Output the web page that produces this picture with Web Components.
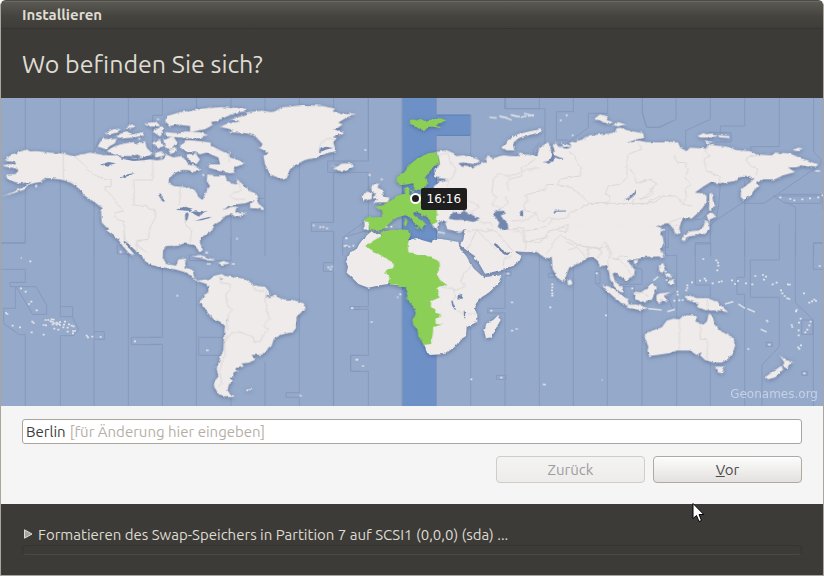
<!DOCTYPE html>
<html lang="de">
<head>
<meta charset="utf-8">
<title>Installieren</title>
<style>
  html, body {
    margin: 0;
    background: #fff;
  }
  body {
    font-family: "Ubuntu", "Open Sans", "Noto Sans", sans-serif;
    font-size: 15px;
    line-height: 20px;
  }
</style>
</head>
<body>
<installer-window caption="Installieren" heading="Wo befinden Sie sich?">
  <time-zone-map credit="Geonames.org">
    <map-pin time="16:16"></map-pin>
  </time-zone-map>
  <location-form city="Berlin" hint="[für Änderung hier eingeben]"></location-form>
  <install-status slot="footer">Formatieren des Swap-Speichers in Partition 7 auf SCSI1 (0,0,0) (sda) ...</install-status>
  <mouse-pointer slot="overlay"></mouse-pointer>
</installer-window>

<script>
// The map is drawn in a 2466 x 924 space, one region at a time.
// "at" is the origin of the region, all its paths are relative to it.
const REGIONS = [
  {
    name: "north-america-west",
    at: [-3, -6],
    land: `M15 190 25 182 45 172 80 160 90 166 110 165 150 170 190 173 222 181 240 176 270 170 285 172 310 177 345 178 370 187 400 186 420 189 428 178 450 190 470 193 490 190 500 176 520 184 545 180 560 196 566 210 590 225 560 222 545 222 522 232 507 250 506 262 525 270 560 274 585 282 592 300 608 312 616 290 630 280 630 405 595 430 600 450 570 442 540 440 510 445 490 452 487 480 430 480 372 432 370 440 395 470 400 480 385 470 355 430 330 405 305 380 303 345 308 337 285 320 255 300 240 280 215 262 190 252 160 248 135 246 120 258 100 262 85 268 75 280 40 292 5 300 40 288 75 270 95 258 60 262 45 258 22 250 18 236 45 234 55 226 48 218 15 212 8 208 28 204 48 205 45 198 20 195Z
      M270 305 292 316 315 330 316 337 290 323Z
      M102 270 112 264 110 272Z
      M293 152 300 138 312 128 332 130 350 128 345 142 330 150 318 160Z
      M320 165 335 155 350 148 375 142 400 138 410 145 435 135 440 155 450 165 458 175 430 185 412 176 395 180 365 180 340 175Z
      M315 112 330 104 345 98 360 100 350 110 330 115Z
      M345 122 362 114 380 105 395 115 430 108 432 118 400 125 365 128Z
      M375 97 388 88 402 84 405 94Z
      M432 82 460 78 475 82 480 90 455 92Z
      M458 107 480 93 490 110 480 122Z M478 94 484 90 492 98 486 102Z
      M455 140 480 132 492 150 475 158Z
      M490 132 520 120 532 140 515 160 495 155Z
      M495 75 500 60 540 48 590 42 630 35 632 62 600 72 632 78 630 92 600 100 588 86 570 90 530 86 510 90Z
      M495 108 540 112 555 106 600 108 625 118 570 126 500 122Z
      M505 165 528 154 530 165 515 174Z M460 172 485 165 495 178 470 184Z
      M540 148 560 132 600 135 632 140 632 172 590 165 560 168 545 160Z
      M560 174 585 176 600 190 590 204 570 198Z
      M575 205 592 212 600 224 580 222Z`,
    water: `M528 342 540 336 555 332 578 338 570 345 545 343Z M555 354 562 348 566 354 562 375 556 372Z M572 348 590 346 605 352 598 362 588 358Z M585 374 605 368 630 362 630 366 605 373Z
      M475 297 482 295 488 306 495 316 488 317Z M355 242 375 236 405 231 385 240 365 245Z M300 206 325 198 348 202 330 206 325 212Z
      M365 188 388 186 418 190 440 180 460 186 440 192 400 195Z`,
    borders: `M190 173V250L230 262 M222 181 240 195 255 208 262 222 290 240 312 250H333V272L315 272 318 284 335 298 342 312 358 330 370 345 345 350 343 360 355 372 372 375V432
      M458 194V252H402V328H440L445 338 462 342 467 365 455 385 448 405 445 430 410 434V470 M540 276V328 M555 372 560 392 575 402 570 440`,
    zones: `M76 6V440H3 M181 6V480 M282 6V166 M385 6V84 M487 6V58H458V186 M590 6V40 M300 125 283 165 M282 320V480 M385 475V480 M352 450V472`,
    dots: [[362, 468], [474, 70], [418, 128], [484, 185]]
  },
  {
    name: "atlantic-north",
    at: [567, -6],
    land: `M0 282 20 290 25 305 38 312 45 300 48 285 60 270 50 255 52 235 78 238 105 238 112 255 125 262 138 265 142 250 155 262 175 280 200 295 205 305 195 312 165 322 140 325 115 330 100 342 125 332 145 332 138 345 150 352 172 350 150 360 135 362 125 355 105 360 98 372 75 385 65 405 40 420 25 432 30 450 38 462 28 468 12 445 0 438Z
      M180 325 200 308 205 322 220 335 222 343 205 338 180 336Z
      M0 46 40 38 90 33 165 38 165 46 140 50 110 62 80 75 55 80 70 86 45 100 0 108Z
      M-10 116 40 118 38 126 0 128Z
      M0 132 40 140 75 155 105 170 125 185 165 200 145 210 130 213 138 230 120 232 90 225 55 215 60 205 90 205 85 185 50 170 30 175 5 165Z
      M-10 205 20 212 35 222 10 228 -5 222Z M0 175 18 172 28 190 10 202Z
      M88 92 115 82 150 76 120 68 170 58 165 50 215 44 245 48 280 33 340 28 400 30 435 38 428 46 460 55 498 52 470 65 445 80 458 85 438 100 462 108 440 125 430 140 438 165 410 172 380 185 345 192 320 205 300 220 290 248 270 248 240 235 225 205 220 180 235 170 205 155 218 145 195 120 170 112 115 108 130 102Z
      M418 208 440 212 455 203 485 202 492 212 470 222 450 225 428 218 440 214Z
      M543 270 553 262 569 264 562 275 576 281 581 297 599 307 592 319 565 319 548 322 561 312 550 305 560 296 545 283Z
      M515 303 530 287 547 290 545 309 519 315Z`,
    water: `M387 162 405 152 430 156 412 160 390 168Z M432 100 452 96 445 104Z M428 122 450 114 445 122Z M20 350 55 344 35 352Z`,
    borders: `M145 252 150 275 155 285 130 290 122 300 135 310H165 M438 130 410 128 392 140 386 165 M118 165V200`,
    zones: `M19 6V34 M123 6V30 M123 360V480 M225 6V46 M225 210V480 M205 307H225 M328 6V30 M328 205V480 M431 6V36 M431 170V195H413V229H431V379H364V406H431V480 M535 6V195H431 M431 229H535V360 M524 377 458 425V480`,
    dots: [[371, 388], [391, 393], [400, 393], [411, 397], [469, 427], [141, 428], [575, 250], [538, 236], [40, 237], [464, 450], [478, 452], [490, 449], [50, 470]]
  },
  {
    name: "europe",
    at: [987, -6],
    land: `M318 168 350 162 372 172 378 180 400 178 440 188 448 198 430 204 400 200 385 202 398 213 405 208 420 212 430 215 445 205 470 198 468 185 475 182 490 186 520 178 560 182 585 175 640 182 640 446 405 440 410 425 410 403 385 407 352 400 345 385 352 378 340 372 325 380 320 402 305 385 315 340 318 295 308 292 312 270 330 256 355 250 315 245 313 220 330 205 325 180Z
      M103 374 120 376 116 402 104 400Z
      M517 155 532 135 560 116 600 106 632 100 632 106 600 116 565 126 548 142 552 162 530 162Z
      M40 450 50 446 60 454Z`,
    selected: `M238 74 250 70 262 74 270 68 285 75 295 72 340 66 350 72 330 82 318 85 333 97 310 92 295 92 282 106 270 100 255 92 242 84Z
      M200 238 222 230 240 205 265 185 295 172 318 168 325 180 328 205 312 210 300 225 285 245 295 262 280 275 265 285 255 282 247 262 235 265 210 268 200 255Z
      M222 278 235 270 240 284 236 294 226 294Z M242 286 252 284 250 292Z
      M135 332 160 328 180 312 200 300 225 293 250 296 300 290 322 290 320 340 322 378 306 386 292 366 270 352 252 348 250 356 262 366 282 378 290 388 280 386 276 402 266 390 250 380 238 362 225 358 200 365 190 372 175 385 162 400 140 405 118 402 116 378 103 374 106 364 155 364 158 348Z
      M222 368 230 366 232 378 228 392 222 386Z M250 395 268 394 266 403Z M190 386 198 383 196 388Z`,
    water: `M355 368 370 348 388 354 402 344 415 352 430 358 450 370 430 378 400 372 375 372Z
      M488 352 500 345 520 345 528 352 512 358 520 370 532 378 535 400 515 402 503 392 508 380Z
      M568 350 576 346 580 356 572 360Z`,
    borders: `M325 180 352 168 360 195 378 220 368 245 356 252 M356 250 352 275 M410 310 440 325 445 335 420 352 M360 325 410 320 M630 215 590 220 560 235 530 240 505 232 490 250 486 290 500 305 485 325 512 335 506 345 M450 378 480 380 488 390 M410 405 440 400 470 408 488 400 M535 400 570 405 585 435 M620 350 590 372 545 375`,
    zones: `M115 6V195 M217 6V230 M319 6V57 M319 118V168 M422 57V184 M524 6V38H630 M115 230V285 M10 230V377 M630 140 610 160V176 M115 402 40 425`,
    dots: [[170, 393], [106, 162], [184, 392]],
    bars: `M478 64 500 66 M508 60 530 66 545 72 M545 58 570 62 M582 52 612 60 M120 236V240 M324 408 345 412 M384 408 396 406`
  },
  {
    name: "africa",
    at: [987, 366],
    land: `M48 125 60 100 78 88 95 62 100 55 118 40 125 34 132 40 150 40 155 50 200 45 232 62 262 54 275 60 305 68 310 56 340 58 385 66 388 80 410 110 422 132 432 146 460 172 515 166 505 190 480 215 455 232 440 248 432 262 442 285 442 305 410 322 408 348 390 360 375 380 345 402 300 405 290 395 282 372 290 330 262 250 240 205 205 195 175 192 150 196 115 203 85 192 65 172 50 158 54 140Z
      M505 285 512 300 498 325 485 352 468 355 463 335 470 310 490 300Z
      M390 76 400 60 405 35 440 0 605 0 605 96 560 94 530 98 515 88 495 66 492 74 508 90 520 102 532 106 548 92 575 108 568 124 548 138 525 148 465 161 450 135 430 105 412 92Z`,
    selected: `M105 78 130 62 155 48 152 35 200 28 238 30 242 45 232 58 235 95 262 105 285 105 328 124 330 145 318 158 330 180 352 196 325 200 320 208 330 232 303 244 303 262 316 268 316 278 330 282 328 292 316 296 318 312 337 314 310 320 308 345 303 372 282 375 265 350 262 328 250 315 247 300 258 282 250 260 228 235 232 212 230 202 205 200 200 192 175 194 175 182 182 178 166 155 172 148 192 145 190 128Z`,
    water: `M383 228 400 223 398 236 382 238Z M364 242 368 243 378 266 374 268 366 256Z M401 272 405 274 406 296 402 292Z`,
    borders: `M425 132 415 150 400 160 392 185 408 195 395 205 370 212 378 230 365 245 M378 268 400 282 440 282 M335 200 375 208 M412 90 440 30 500 90 M470 28 500 35 550 95 M520 138 522 118 545 108`,
    zones: `M10 35V560 M115 204V260H60V268H115V406H62V454H115V560 M217 210V560 M319 402V560 M422 322V560 M525 155H543V167H525V265H473V279H525V560 M500 466H528V478H500Z`,
    dots: [[66, 264], [125, 306], [81, 419], [99, 438], [424, 478], [514, 473], [484, 272], [546, 247], [546, 332], [560, 327], [534, 161], [211, 223], [49, 54]],
    bars: `M200 232H205`
  },
  {
    name: "asia-north",
    at: [1497, -6],
    land: `M-5 182 30 184 60 180 55 170 75 178 105 190 112 180 118 155 145 138 152 158 155 175 165 165 158 148 168 142 175 152 190 150 185 140 215 150 208 140 250 130 265 118 300 115 330 112 345 108 350 96 365 95 380 102 430 112 432 125 410 132 440 138 515 140 515 385 490 380 465 388 475 392 468 400 492 398 480 410 488 435 480 482 140 482 110 468 50 465 20 450 -5 440Z
      M10 155 25 135 50 118 85 108 125 100 128 106 95 114 60 122 42 135 32 150 45 162 20 162Z
      M280 70 300 55 325 62 320 72 340 78 325 84 300 74Z M340 86 355 78 378 86 350 92Z`,
    water: `M128 198 148 194 156 180 154 165 164 178 190 188 188 192 164 184 160 196 146 203Z M160 350 165 344 198 343 198 346 170 347 164 353Z M370 312 388 304 402 292 407 282 408 292 400 302 385 310Z M175 154 200 158 215 154 200 152Z M380 140 410 130 428 128 400 138Z M60 345 70 346 68 358Z`,
    borders: `M105 190 85 205 65 215V240L28 250 20 265 28 285 M205 165 225 180 230 200 243 215 240 240 205 245 180 250 172 266 140 265 135 280 75 298 85 315 70 325 75 345 105 348 115 370 130 378 145 365 170 370 200 366 210 350 235 340 270 322
      M172 266 215 275 245 300 270 322 325 318 330 300 315 295 325 270 360 265 385 240 380 215 383 175 410 165 425 160 415 140
      M270 322H395L400 312 440 305 460 290 450 280 470 265 455 250 430 255 408 262 405 240 390 220
      M395 322H440L480 300 512 298 M15 300 25 320 0 340 M30 400 70 395 75 440 110 430 140 425 145 405 170 400 200 410 205 385 170 400 M75 405 110 400 140 390 160 370
      M140 475 160 440 180 418 205 430 245 450 300 458 320 450 330 475 M262 455 268 478`,
    zones: `M17 6V38H135V160L105 172 M118 6V38 M220 6V47H169V132H205 M323 6V52H265V95L200 142 M427 6V55L440 94H475L512 78`,
    dots: [[200, 58], [182, 73], [218, 118]],
    bars: `M2 62 22 66 M32 56 55 62 M62 64 80 60 M84 60 102 57`
  },
  {
    name: "asia-east",
    at: [1917, -6],
    land: `M-5 136 15 140 60 142 80 136 115 140 120 155 140 165 150 155 200 158 205 145 225 148 260 152 290 162 330 165 350 175 395 178 405 170 450 172 485 188 510 195 535 205 525 215 505 212 480 208 470 214 445 215 465 228 430 238 405 250 370 250 348 262 355 270 340 285 335 295 312 315 302 300 303 280 330 260 345 245 365 238 330 250 330 240 300 240 285 255 240 262 212 258 190 272 165 290 190 292 200 300 200 320 180 345 155 368 130 368 122 380 118 395 122 412 105 415 100 400 92 388 85 380 62 390 45 388 75 402 52 408 68 440 60 460 45 482 -5 482Z
      M208 294 215 290 220 318 226 330 214 336 214 345 207 342Z M200 358 210 350 230 362 218 366 205 374Z
      M196 374 206 376 209 400 196 414 178 413 165 419 148 421 133 427 130 418 150 406 175 403 190 392Z M123 425 139 421 136 436 127 434Z
      M172 120 190 111 200 115 215 112 230 120 215 125 180 125Z M234 117 268 120 268 126 238 124Z M194 133 220 138 200 142Z M458 161 475 155 487 159 468 165Z M60 470 68 466 64 480 60 480Z`,
    borders: `M103 178 110 198 135 200 145 220 135 245 150 265 135 280 140 300 128 325 155 330 M205 145 195 165 210 180 192 190 200 225 235 240 242 262 M365 178 325 182 318 195 335 212 352 215 350 235 M0 262 30 250 50 262 30 290 0 312 M0 325 45 318 70 300 110 300 125 322 M85 380 125 365 M100 390 118 385`,
    zones: `M7 6V48L20 94H60L108 70V6 M211 6V70L137 104V155 M314 6V90H241V112 M418 6V152H332V165 M521 6V168L543 190V205L372 322H314V255 M241 262 236 330 228 370 M212 482V440H166V482 M314 322V482 M314 316 220 378 211 390V440 M165 370H185L210 345 M400 300H543V295H418 M543 300V322H436L400 300 M436 318 467 334V482 M521 440V482 M521 440H548 M205 110H273V138H225 M85 400V455H75`,
    dots: [[421, 304], [451, 309], [463, 313], [487, 310], [510, 307], [535, 304], [548, 298]],
    bars: `M526 225H540`
  },
  {
    name: "oceania",
    at: [1557, 396],
    land: `M-5 -20V65H50L62 75 80 84 95 84 98 118 115 145 127 154 138 140 145 118 165 105 190 92 205 82 225 85 235 95 240 112 262 108 268 130 270 148 285 172 300 186 308 188 305 170 285 155 278 130 285 128 300 138 318 152 342 135 345 120 328 100 325 90 345 88 360 85 380 78 410 62 432 42 428 20 410 8 415 -10 -5 -20Z
      M142 149 152 147 157 163 144 166Z M341 91 355 89 350 102 342 101Z M417 78 428 65 431 75 422 83Z
      M247 164 268 170 295 188 322 207 327 224 305 220 285 204 262 184Z M319 224 350 224 384 234 360 240 325 234Z
      M343 185 362 187 382 174 398 159 411 171 403 190 396 209 365 216 347 207 341 193Z
      M409 200 418 190 453 186 432 197 442 218 425 209 422 223 410 213Z
      M417 104 430 99 436 118 425 131 417 121Z M433 127 456 133 454 146 440 142Z M443 155 460 147 463 163 449 166Z
      M490 198 510 197 530 204 560 204 590 214 605 228 625 247 600 242 575 242 555 240 530 230 535 220 510 213Z
      M375 310 400 300 425 292 440 272 460 266 478 268 490 256 525 256 532 262 526 274 550 284 560 275 568 250 578 260 585 285 605 305 635 320 647 340 640 365 625 388 605 398 580 398 555 390 540 376 545 366 530 375 510 362 470 362 445 370 410 375 388 378 382 365 385 350 374 325Z
      M585 410 613 410 606 430 592 427Z M779 375 797 390 818 395 806 406 801 416 787 409 793 398Z M735 441 760 424 782 408 790 418 766 442 745 448Z`,
    borders: `M478 268V360 M541 284V328H562V392 M562 206V238 M205 82 200 60 225 50 245 62 235 85 M145 60 170 52 190 70 195 90 M135 35 160 45 190 50 240 55 255 35 275 70 262 90 270 130 M275 85 300 90 325 120 335 135 M345 190 370 188 385 200 M285 90 300 78 325 80 M15 60 20 35 60 38 85 8`,
    zones: `M58 65V528 M160 108V528 M262 180V528 M366 238V528 M470 180V265 M470 365V528 M571 -2V42H526V165H571V200 M571 395V528 M674 0V142H651V193H674V528 M778 -20V90H691V202H778V350L726 405V528 M826 6V218L880 270V528 M880 40V118H909 M880 40H909 M240 124V160H226V124Z M226 160 262 190 M300 170H343V210 M366 118V163H300 M340 112 366 118 M436 0V76H470V180L445 205 458 235 M845 270H878V313H845Z M845 424H863V436H845Z M738 337H757V349H738Z M85 130H103V142H85Z M909 -100V-60`,
    dots: [[97, 163], [97, 172], [96, 181], [97, 190], [97, 197], [91, 232], [258, 256], [550, 87], [589, 91], [594, 98], [595, 107], [592, 121], [516, 157], [540, 152], [554, 146], [558, 152], [578, 160], [597, 156], [605, 154], [636, 151], [645, 162], [654, 153], [678, 160], [697, 163], [706, 138], [729, 135], [738, 140], [732, 149], [758, 163], [770, 158], [804, 163], [809, 164], [783, 181], [787, 190], [794, 198], [802, 205], [808, 207], [852, 190], [868, 218], [876, 214], [883, 209], [888, 213], [828, 244], [830, 240], [842, 266], [837, 278], [815, 285], [817, 291], [836, 301], [836, 316], [862, 299], [856, 307], [872, 275], [868, 286], [843, 346], [838, 357], [835, 352], [685, 357], [748, 344], [853, 430], [899, 108], [502, 166], [502, 174], [499, 181], [472, 185], [473, 194], [463, 212], [478, 211], [488, 210], [440, 150], [448, 138], [437, 125], [230, 130], [337, 175], [322, 208]],
    bars: `M68 463 78 464 M615 222 640 215 M655 222 675 235 M682 236 705 246 M385 236 425 240 M442 245 465 238 M400 152 415 140 M722 298 740 306 M738 270 745 276 M245 450 248 450`
  },
  {
    name: "south-america",
    at: [447, 426],
    land: `M-5 -10 150 -8 150 8 158 30 150 35 138 15 100 10 85 18 50 18 38 32 38 50 48 72 78 77 85 58 108 55 104 82 128 90 133 115 145 122 168 118 180 126 168 132 152 126 138 122 110 98 75 88 40 82 -5 72Z
      M165 125 180 118 190 108 215 102 225 108 260 112 285 117 300 128 320 138 345 140 362 160 350 172 375 168 400 178 430 180 462 190 467 205 440 230 438 260 425 278 400 282 372 296 365 318 335 345 305 345 316 358 300 368 278 370 275 382 258 384 262 392 250 398 250 412 240 415 253 425 238 432 232 450 240 462 255 470 225 472 205 462 192 440 192 425 205 410 200 385 210 355 220 330 222 290 225 258 210 245 185 235 165 205 148 188 160 170 175 155 175 140Z
      M127 49 150 45 175 53 197 62 175 61 150 53Z M204 68 222 63 239 70 215 75Z M287 450 308 446 298 454Z`,
    water: `M213 112 218 114 216 119 212 118Z M228 241 233 243 232 248Z M345 172 358 164 360 168Z`,
    borders: `M208 108 212 128 240 132 242 150 228 160 230 190 245 212 235 222 232 270 M225 305 245 280 262 275 275 278 310 292 312 304 330 305 340 285 355 268 340 255 358 235 350 210 345 180 350 155 315 150 308 138 M232 285 225 310 225 345 215 370 210 395 215 430 205 440 M345 172 380 168`,
    zones: `M37 80V292H0 M0 313H37V498 M139 124V498 M243 -5V62H118V45H140 M243 470V498 M345 365V498 M448 -5V458H408V472H448V498 M551 -5V68H520V94H551V498 M222 292H146V346H210 M600 200H630 M600 200V209H630 M602 346H630 M602 346V394H630`,
    dots: [[82, 167], [606, 205], [620, 359], [452, 467], [535, 82], [545, 80], [542, 88], [170, 38]],
    bars: `M168 331H176 M170 72H182 M245 72H255`
  },
  {
    name: "pacific",
    at: [-3, 396],
    land: `M318 0 452 0 480 40 480 112 455 105 435 94 432 85 410 65 395 50 383 38 368 30 375 45 390 58 404 75 392 70 370 50 355 28Z`,
    borders: `M372 0 375 28 385 38 M412 30V45L440 68`,
    zones: `M76 0V40H3 M181 0V230H218V262L236 298 220 317H181V528 M282 30V528 M385 60V528 M3 118H76V157H30V170H108L140 226V253H98L48 170 M46 170V235H11V281L58 314H76V528 M181 230V260H218 M352 45V72H395 M282 305H313V328H282 M480 322H394V344H480`,
    dots: [[91, 94], [63, 175], [77, 185], [94, 215], [87, 222], [110, 241], [18, 249], [22, 252], [38, 287], [60, 292], [97, 275], [101, 279], [95, 307], [131, 314], [131, 285], [138, 286], [137, 270], [145, 270], [152, 274], [155, 268], [161, 269], [158, 276], [163, 280], [170, 278], [170, 284], [176, 281], [180, 276], [158, 283], [180, 285], [190, 292], [195, 275], [207, 283], [203, 293], [203, 305], [192, 284], [215, 287], [221, 289], [219, 303], [225, 303], [219, 310], [163, 296], [175, 299], [260, 317], [264, 322], [277, 320], [302, 321], [405, 334]],
    bars: `M62 84H66`
  }
];

class InstallerWindow extends HTMLElement {
  constructor() {
    super();
    this.attachShadow({ mode: "open" });
  }

  connectedCallback() {
    this.render();
  }

  render() {
    this.shadowRoot.innerHTML = `
      <style>
        :host {
          display: flex;
          flex-direction: column;
          position: relative;
          box-sizing: border-box;
          min-height: 100vh;
          border: 1px solid #aaa59d;
          border-top-color: #4d4c47;
          border-radius: 6px 6px 0 0;
          overflow: hidden;
          background: #3c3b37;
          color: #dfdbd2;
        }
        .titlebar {
          padding: 4px 21px 3px;
          border-bottom: 1px solid #353430;
          background: linear-gradient(#5b5a53, #45443f 55%, #3e3d39);
          box-shadow: inset 0 1px #6b6a62;
          font-weight: 700;
        }
        h1 {
          margin: 0;
          padding: 19px 21px 18px;
          font-size: 25px;
          font-weight: 400;
          line-height: 32px;
        }
        footer {
          flex: 1;
        }
      </style>
      <div class="titlebar">${this.getAttribute("caption")}</div>
      <h1>${this.getAttribute("heading")}</h1>
      <main><slot></slot></main>
      <footer><slot name="footer"></slot></footer>
      <slot name="overlay"></slot>
    `;
  }
}

class TimeZoneMap extends HTMLElement {
  constructor() {
    super();
    this.attachShadow({ mode: "open" });
  }

  connectedCallback() {
    this.render();
  }

  layer(kind) {
    return REGIONS.filter((region) => region[kind])
      .map(({ at, [kind]: d }) => `<path class="${kind}" transform="translate(${at})" d="${d}" />`)
      .join("");
  }

  dots() {
    return REGIONS.map(({ at, dots }) => {
      const d = dots.map(([x, y]) => `M${x - 3} ${y}h6`).join("");
      return `<path class="dots" transform="translate(${at})" d="${d}" />`;
    }).join("");
  }

  render() {
    this.shadowRoot.innerHTML = `
      <style>
        :host {
          display: block;
          position: relative;
          background: #95a9ca;
        }
        svg {
          display: block;
          width: 100%;
          height: auto;
        }
        path {
          stroke-linejoin: round;
        }
        .zones {
          fill: none;
          stroke: #8799bd;
          stroke-width: 3;
        }
        .band {
          fill: #6d91c7;
          stroke: #5c7fb5;
          stroke-width: 3;
        }
        .land {
          fill: #eeebea;
        }
        .selected {
          fill: #8ccf57;
        }
        .water {
          fill: #7187ae;
        }
        .borders {
          fill: none;
          stroke: #dcd8d7;
          stroke-width: 3;
        }
        .dots {
          fill: none;
          stroke: #e3e4e8;
          stroke-width: 5;
        }
        .bars {
          fill: none;
          stroke: #d5dae3;
          stroke-width: 5;
        }
        .credit {
          position: absolute;
          right: 5px;
          bottom: 2px;
          color: #c5d1e4;
          font: 12px/20px "DejaVu Sans", sans-serif;
        }
      </style>
      <svg viewBox="0 0 2466 924" role="img" aria-label="Zeitzonenkarte">
        <defs>
          <filter id="coast" filterUnits="userSpaceOnUse" x="0" y="0" width="2466" height="924" color-interpolation-filters="sRGB">
            <feTurbulence type="fractalNoise" baseFrequency=".07" numOctaves="2" seed="4" result="noise" />
            <feDisplacementMap in="SourceGraphic" in2="noise" scale="9" xChannelSelector="R" yChannelSelector="G" result="rough" />
            <feDropShadow in="rough" dx="0" dy="3" stdDeviation="6" flood-color="#3d4f78" flood-opacity=".6" />
          </filter>
        </defs>
        <path class="band" d="M1204 -5H1306V51H1409V112H1306V930H1204Z" />
        ${this.layer("zones")}
        <g filter="url(#coast)">
          ${this.layer("land")}
          ${this.layer("borders")}
          ${this.layer("selected")}
          ${this.layer("water")}
        </g>
        ${this.layer("bars")}
        ${this.dots()}
      </svg>
      <span class="credit">${this.getAttribute("credit")}</span>
      <slot></slot>
    `;
  }
}

class MapPin extends HTMLElement {
  constructor() {
    super();
    this.attachShadow({ mode: "open" });
  }

  connectedCallback() {
    this.render();
  }

  render() {
    this.shadowRoot.innerHTML = `
      <style>
        :host {
          display: flex;
          align-items: center;
          position: absolute;
          left: 49.7%;
          top: 29.2%;
        }
        .point {
          box-sizing: border-box;
          width: 11px;
          height: 11px;
          border: 2px solid #fff;
          border-radius: 50%;
          background: #1e1e1e;
        }
        .time {
          padding: 1px 6px;
          border-radius: 2px;
          background: #1e1e1e;
          color: #fff;
          font: 12px/20px "DejaVu Sans", sans-serif;
        }
      </style>
      <span class="point"></span>
      <span class="time">${this.getAttribute("time")}</span>
    `;
  }
}

class LocationForm extends HTMLElement {
  constructor() {
    super();
    this.attachShadow({ mode: "open" });
  }

  connectedCallback() {
    this.render();
  }

  render() {
    this.shadowRoot.innerHTML = `
      <style>
        :host {
          display: block;
          padding: 13px 21px 21px;
          background: #f5f5f5;
          color: #3c3c3c;
        }
        .field {
          display: flex;
          align-items: center;
          gap: 4px;
          box-sizing: border-box;
          height: 25px;
          padding: 0 3px;
          border: 1px solid #aaa59e;
          border-radius: 3px;
          background: #fff;
        }
        input {
          field-sizing: content;
          margin: 0;
          padding: 0;
          border: 0;
          outline: 0;
          background: none;
          color: inherit;
          font: inherit;
        }
        label {
          flex: 1;
          color: #b5aea6;
        }
        .buttons {
          display: flex;
          justify-content: flex-end;
          gap: 8px;
          margin-top: 12px;
        }
        button {
          width: 149px;
          height: 27px;
          padding: 0;
          border: 1px solid #aea9a2;
          border-radius: 4px;
          background: linear-gradient(#fcfcfc, #f0efee 50%, #e3e1df);
          box-shadow: inset 0 1px #fff;
          color: #4c4c4c;
          font: inherit;
        }
        button:disabled {
          border-color: #d0ccc7;
          background: linear-gradient(#f5f4f4, #edecea);
          box-shadow: none;
          color: #9c9c9c;
        }
      </style>
      <div class="field">
        <input id="city" value="${this.getAttribute("city")}">
        <label for="city">${this.getAttribute("hint")}</label>
      </div>
      <div class="buttons">
        <button type="button" disabled>Zurück</button>
        <button type="button" accesskey="v"><u>V</u>or</button>
      </div>
    `;
  }
}

class InstallStatus extends HTMLElement {
  constructor() {
    super();
    this.attachShadow({ mode: "open" });
  }

  connectedCallback() {
    this.render();
  }

  render() {
    this.shadowRoot.innerHTML = `
      <style>
        :host {
          display: block;
          padding: 21px 21px 20px;
        }
        summary {
          display: flex;
          align-items: center;
          gap: 5px;
          padding-left: 2px;
          list-style: none;
        }
        progress {
          display: block;
          appearance: none;
          box-sizing: border-box;
          width: 100%;
          height: 10px;
          border: 1px solid #353430;
          border-bottom-color: #494843;
          border-radius: 4px;
          background: none;
        }
        progress::-webkit-progress-bar {
          background: none;
        }
      </style>
      <details>
        <summary>
          <svg aria-hidden="true" viewBox="0 0 9 12" width="9" height="12">
            <path fill="#a8a59d" stroke="#dfdbd2" d="M.5 .8 8 5 .5 9.200Z" />
          </svg>
          <span id="step"><slot></slot></span>
        </summary>
      </details>
      <progress value="0" max="100" aria-labelledby="step"></progress>
    `;
  }
}

class MousePointer extends HTMLElement {
  constructor() {
    super();
    this.attachShadow({ mode: "open" });
    this.shadowRoot.innerHTML = `
      <style>
        :host {
          position: absolute;
          left: 691px;
          top: 501px;
          pointer-events: none;
        }
        svg {
          display: block;
        }
      </style>
      <svg aria-hidden="true" viewBox="0 0 13 21" width="13" height="21">
        <path fill="#fff" stroke="#000" d="M1 1.500V16.500L4.500 13.500 7 19.500 9.500 18.500 7 12.500H11.800Z" />
      </svg>
    `;
  }
}

customElements.define("installer-window", InstallerWindow);
customElements.define("time-zone-map", TimeZoneMap);
customElements.define("map-pin", MapPin);
customElements.define("location-form", LocationForm);
customElements.define("install-status", InstallStatus);
customElements.define("mouse-pointer", MousePointer);
</script>
</body>
</html>
